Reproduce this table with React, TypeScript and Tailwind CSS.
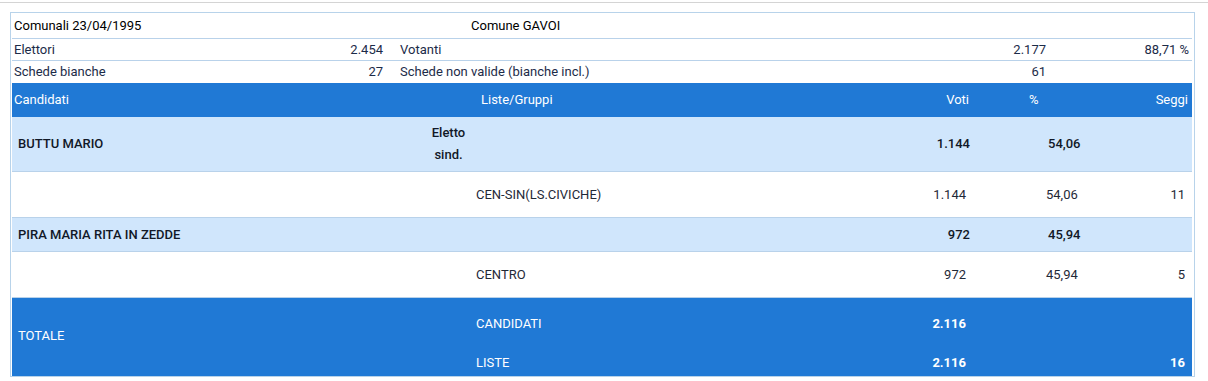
const summary = [
  { label: "Elettori", value: "2.454", label2: "Votanti", value2: "2.177", pct: "88,71 %" },
  { label: "Schede bianche", value: "27", label2: "Schede non valide (bianche incl.)", value2: "61", pct: "" },
];

type Candidate = {
  name: string;
  elected?: boolean;
  votes: string;
  pct: string;
  lists: { name: string; votes: string; pct: string; seats: string }[];
};

const candidates: Candidate[] = [
  {
    name: "BUTTU MARIO",
    elected: true,
    votes: "1.144",
    pct: "54,06",
    lists: [{ name: "CEN-SIN(LS.CIVICHE)", votes: "1.144", pct: "54,06", seats: "11" }],
  },
  {
    name: "PIRA MARIA RITA IN ZEDDE",
    votes: "972",
    pct: "45,94",
    lists: [{ name: "CENTRO", votes: "972", pct: "45,94", seats: "5" }],
  },
];

function CandidateRow({ c }: { c: Candidate }) {
  return (
    <div
      className={`flex items-center bg-[#d0e6fc] border-b border-[#b9d2ea] font-medium text-[#111827] ${
        c.elected ? "h-[55px]" : "h-[34px]"
      }`}
    >
      <div className="w-[409px] pl-[6px]">{c.name}</div>
      <div className="w-[55px] text-center leading-[22px]">
        {c.elected && (
          <>
            Eletto
            <br />
            sind.
          </>
        )}
      </div>
      <div className="w-[425px]" />
      <div className="w-[75px] text-right pr-[6px]">{c.votes}</div>
      <div className="w-[125px] pl-[72px]">{c.pct}</div>
      <div className="w-[91px]" />
    </div>
  );
}

function ListRow({ name, votes, pct, seats }: Candidate["lists"][number]) {
  return (
    <div className="flex items-center h-[46px] bg-white border-b border-[#b9d2ea] text-[#1f2937]">
      <div className="w-[409px]" />
      <div className="w-[55px]" />
      <div className="w-[425px]">{name}</div>
      <div className="w-[75px] text-right pr-[10px]">{votes}</div>
      <div className="w-[125px] pl-[70px]">{pct}</div>
      <div className="w-[91px] text-right pr-[7px]">{seats}</div>
    </div>
  );
}

export default function App() {
  return (
    <div
      className="w-[1208px] h-[381px] bg-white text-[13px] border-t border-[#d4d4d4] mt-[2px] pt-[9px]"
      style={{ fontFamily: "Roboto, 'Liberation Sans', sans-serif" }}
    >
      <div className="ml-[10px] w-[1185px] border border-[#b8d3ea] pl-px pr-[2px]">
        {/* summary block */}
        <div className="flex items-center h-[26px] border-b border-[#b9d2ea] text-black">
          <div className="w-[459px] pl-[2px]">Comunali 23/04/1995</div>
          <div>Comune GAVOI</div>
        </div>
        {summary.map((r, i) => (
          <div
            key={r.label}
            className={`flex items-center h-[22px] text-[#1c2b48] ${
              i < summary.length - 1 ? "border-b border-[#b9d2ea]" : ""
            }`}
          >
            <div className="w-[374px] flex justify-between pl-[2px] pr-[3px]">
              <span>{r.label}</span>
              <span>{r.value}</span>
            </div>
            <div className="w-[660px] flex justify-between pl-[14px]">
              <span>{r.label2}</span>
              <span>{r.value2}</span>
            </div>
            <div className="flex-1 text-right pr-[3px]">{r.pct}</div>
          </div>
        ))}

        {/* results header */}
        <div className="flex items-center h-[34px] bg-[#2079d5] text-white">
          <div className="w-[409px] pl-[2px]">Candidati</div>
          <div className="w-[55px]" />
          <div className="w-[425px] pl-[5px]">Liste/Gruppi</div>
          <div className="w-[75px] text-right pr-[7px]">Voti</div>
          <div className="w-[125px] pl-[53px]">%</div>
          <div className="w-[91px] text-right pr-[4px]">Seggi</div>
        </div>

        {candidates.map((c) => (
          <div key={c.name}>
            <CandidateRow c={c} />
            {c.lists.map((l) => (
              <ListRow key={l.name} {...l} />
            ))}
          </div>
        ))}

        {/* totals */}
        <div className="flex h-[78px] bg-[#2079d5] text-white">
          <div className="w-[409px] pl-[6px] self-center pb-[2px]">TOTALE</div>
          <div className="w-[55px]" />
          <div className="w-[425px] flex flex-col gap-[19px] pt-[16px] leading-[20px]">
            <span>CANDIDATI</span>
            <span>LISTE</span>
          </div>
          <div className="w-[75px] flex flex-col gap-[19px] pt-[16px] leading-[20px] text-right pr-[10px] font-bold">
            <span>2.116</span>
            <span>2.116</span>
          </div>
          <div className="w-[125px]" />
          <div className="w-[91px] flex flex-col gap-[19px] pt-[16px] leading-[20px] text-right pr-[7px] font-bold">
            <span>&nbsp;</span>
            <span>16</span>
          </div>
        </div>
      </div>
    </div>
  );
}
